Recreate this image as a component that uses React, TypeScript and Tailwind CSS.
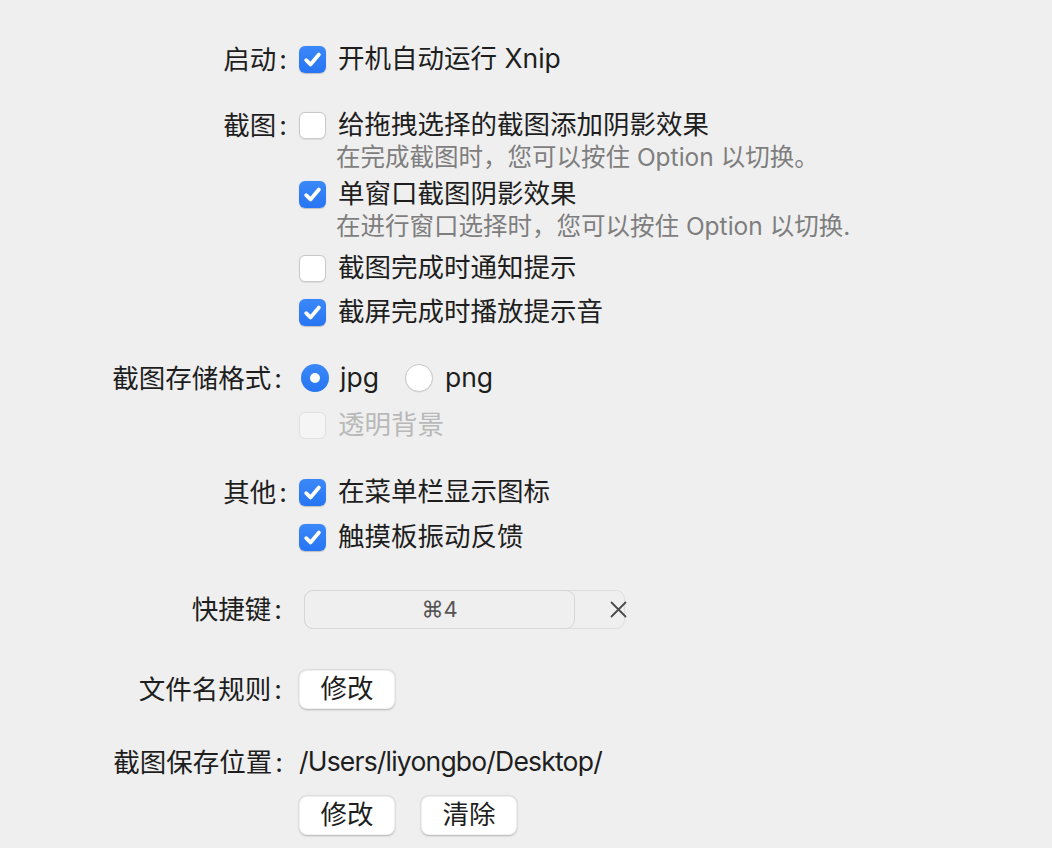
import React from "react";

const FONT = "font-['Inter','Noto_Sans_CJK_SC',sans-serif]";

function Checkbox({ checked, disabled }: { checked?: boolean; disabled?: boolean }) {
  if (checked) {
    return (
      <div className="w-[27px] h-[27px] rounded-[6px] bg-linear-to-b from-[#3a88f8] to-[#2775f3] flex items-center justify-center shrink-0 shadow-[0_0.5px_1px_rgba(0,0,0,0.2)]">
        <svg width="27" height="27" viewBox="0 0 27 27">
          <path d="M7.2 14.2 L11.5 18.4 L19.9 8.6" fill="none" stroke="white" strokeWidth="3.8" strokeLinecap="round" strokeLinejoin="round" />
        </svg>
      </div>
    );
  }
  if (disabled) {
    return <div className="w-[27px] h-[27px] rounded-[6px] bg-[#f5f5f5] border border-[#e0e0e0] shrink-0" />;
  }
  return <div className="w-[27px] h-[27px] rounded-[6px] bg-white border border-[#c9c9c9] shrink-0 shadow-[0_0.5px_1px_rgba(0,0,0,0.08)]" />;
}

function Radio({ checked }: { checked?: boolean }) {
  if (checked) {
    return (
      <div className="w-[28px] h-[28px] rounded-full bg-linear-to-b from-[#3a88f8] to-[#2775f3] flex items-center justify-center shrink-0">
        <div className="w-[10px] h-[10px] rounded-full bg-white" />
      </div>
    );
  }
  return <div className="w-[28px] h-[28px] rounded-full bg-white border border-[#c9c9c9] shrink-0 shadow-[0_0.5px_1px_rgba(0,0,0,0.08)]" />;
}

function CheckRow({ text, checked, disabled, className = "" }: { text: string; checked?: boolean; disabled?: boolean; className?: string }) {
  return (
    <div className={`h-[44px] flex items-center ${className}`}>
      <Checkbox checked={checked} disabled={disabled} />
      <span className={`ml-[12px] text-[26.5px] whitespace-nowrap ${disabled ? "text-[#b9b9b9]" : "text-[#1e1e1e]"}`}>{text}</span>
    </div>
  );
}

function Sub({ text, className = "" }: { text: string; className?: string }) {
  return (
    <div className={`h-[20px] leading-[20px] pl-[37px] text-[24.5px] text-[#7e7e7e] whitespace-nowrap ${className}`}>{text}</div>
  );
}

function Section({ label, children, className = "", labelPad = "" }: { label: string; children: React.ReactNode; className?: string; labelPad?: string }) {
  return (
    <div className={`flex ${className}`}>
      <div className={`w-[287px] shrink-0 text-right h-[44px] leading-[44px] text-[26.5px] text-[#1e1e1e] whitespace-nowrap ${labelPad}`}>
        {label}
        <span className="ml-[3px]">:</span>
      </div>
      <div className="pl-[12px] flex flex-col">{children}</div>
    </div>
  );
}

function Button({ text }: { text: string }) {
  return (
    <div className="w-[96px] h-[39px] rounded-[8px] bg-white flex items-center justify-center text-[26.5px] text-[#1e1e1e] shadow-[0_0.5px_2px_rgba(0,0,0,0.25)] border border-[rgba(0,0,0,0.06)]">
      {text}
    </div>
  );
}

export default function App() {
  return (
    <div className={`w-[1052px] h-[848px] bg-[#efefef] overflow-hidden pt-[37px] ${FONT}`}>
      <Section label="启动">
        <CheckRow text="开机自动运行 Xnip" checked />
      </Section>

      <Section label="截图" className="mt-[22px]">
        <CheckRow text="给拖拽选择的截图添加阴影效果" />
        <Sub text="在完成截图时，您可以按住 Option 以切换。" />
        <CheckRow text="单窗口截图阴影效果" checked className="mt-[5px]" />
        <Sub text="在进行窗口选择时，您可以按住 Option 以切换." />
        <CheckRow text="截图完成时通知提示" className="mt-[10px]" />
        <CheckRow text="截屏完成时播放提示音" checked />
      </Section>

      <Section label="截图存储格式" className="mt-[22px]" labelPad="pr-[5px]">
        <div className="h-[44px] flex items-center">
          <div className="ml-[2px]"><Radio checked /></div>
          <span className="ml-[11px] text-[26.5px] text-[#1e1e1e]">jpg</span>
          <div className="ml-[26px]"><Radio /></div>
          <span className="ml-[12px] text-[26.5px] text-[#1e1e1e]">png</span>
        </div>
        <CheckRow text="透明背景" disabled className="mt-[3px]" />
      </Section>

      <Section label="其他" className="mt-[23px]">
        <CheckRow text="在菜单栏显示图标" checked />
        <CheckRow text="触摸板振动反馈" checked className="mt-[1px]" />
      </Section>

      <Section label="快捷键" className="mt-[28px]" labelPad="pr-[5px]">
        <div className="h-[44px] flex items-center">
          <div className="ml-[5px] w-[321px] h-[39px] rounded-[9px] border border-[#dedede] bg-[#efefef] flex relative">
            <div className="w-[271px] -ml-px -my-px h-[39px] rounded-[9px] border border-[#d6d6d6] bg-[#efefef] flex items-center justify-center text-[22px] text-[#555555]">
              ⌘4
            </div>
            <svg className="absolute right-[-3px] top-[10px]" width="17" height="17" viewBox="0 0 17 17">
              <path d="M1.5 1.5 L15.5 15.5 M15.5 1.5 L1.5 15.5" stroke="#4a4a4a" strokeWidth="1.8" strokeLinecap="round" />
            </svg>
          </div>
        </div>
      </Section>

      <Section label="文件名规则" className="mt-[36px]" labelPad="pr-[5px]">
        <div className="h-[44px] flex items-center">
          <Button text="修改" />
        </div>
      </Section>

      <Section label="截图保存位置" className="mt-[29px]" labelPad="pr-[4px]">
        <div className="h-[44px] flex items-center text-[26.5px] text-[#1e1e1e] whitespace-nowrap tracking-[-0.8px]">/Users/liyongbo/Desktop/</div>
        <div className="h-[44px] flex items-center gap-[26px] mt-[9px]">
          <Button text="修改" />
          <Button text="清除" />
        </div>
      </Section>
    </div>
  );
}
